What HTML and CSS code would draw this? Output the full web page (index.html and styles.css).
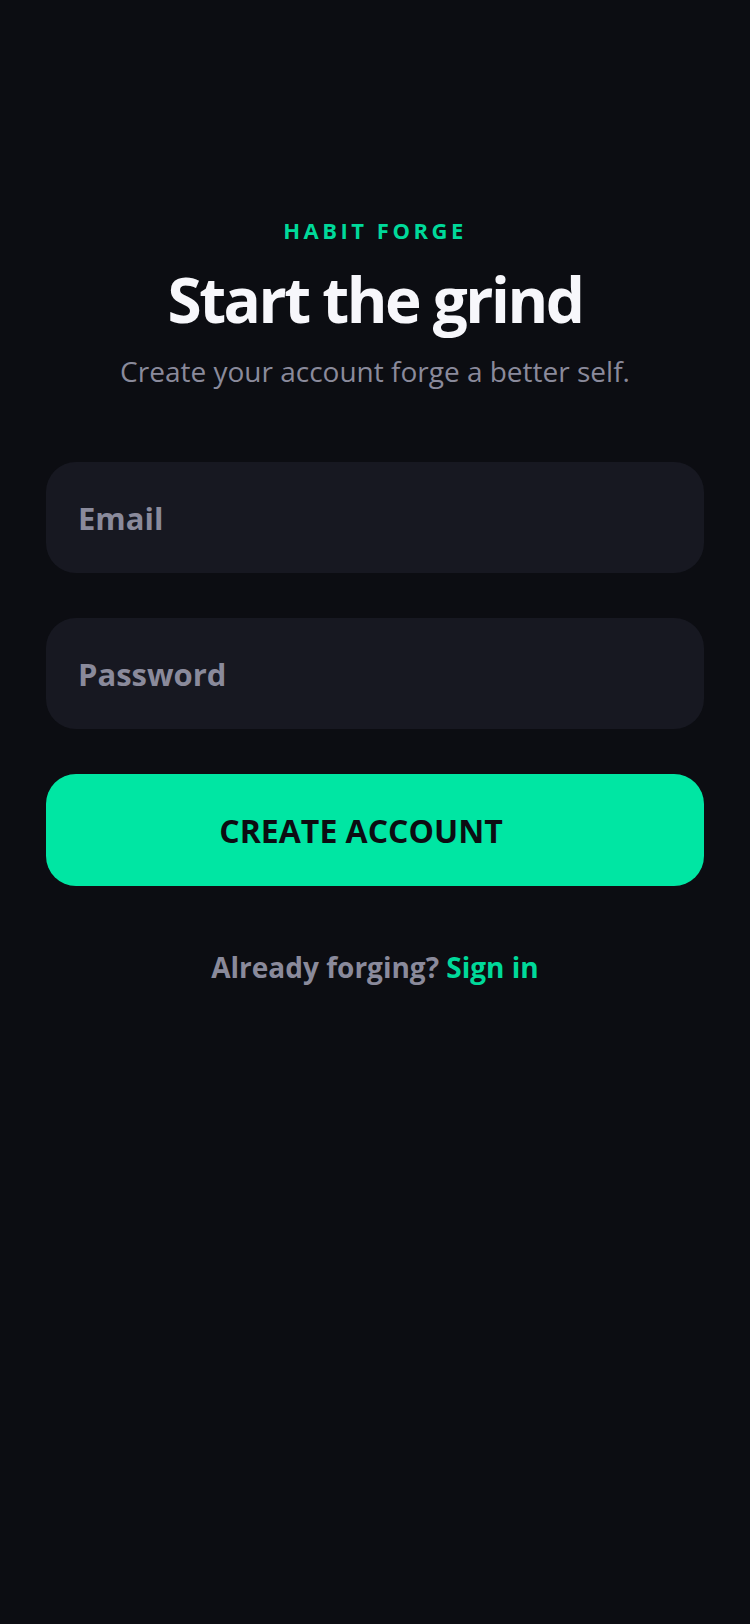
FILE: index.html
```html
<!DOCTYPE html>
<html lang="en">
<head>
<meta charset="utf-8">
<title>Habit Forge - Sign up</title>
<link rel="stylesheet" href="styles.css">
</head>
<body>
<main class="screen">
  <header class="intro">
    <p class="brand">HABIT FORGE</p>
    <h1 class="title">Start the grind</h1>
    <p class="subtitle">Create your account forge a better self.</p>
  </header>
  <form class="form">
    <input class="field" type="email" placeholder="Email">
    <input class="field" type="password" placeholder="Password">
    <button class="cta" type="button"><span class="cta-label">CREATE ACCOUNT</span><span class="cta-slot"></span></button>
  </form>
  <p class="alt">Already forging? <a class="alt-link" href="#">Sign in</a></p>
</main>
</body>
</html>
```

FILE: styles.css
```css
* { box-sizing: border-box; }
html, body {
  margin: 0;
  padding: 0;
  background: #0c0d12;
}
body {
  font-family: "Open Sans", "Noto Sans", sans-serif;
  min-height: 1624px;
}
.screen {
  display: flex;
  flex-direction: column;
  align-items: stretch;
  padding: 215px 46px 0;
}
.intro {
  display: flex;
  flex-direction: column;
  align-items: center;
  text-align: center;
}
.brand {
  margin: 0;
  font-size: 22px;
  line-height: 30px;
  font-weight: 700;
  letter-spacing: 0.16em;
  color: #00d99a;
}
.title {
  margin: 16px 0 0;
  font-size: 62px;
  line-height: 76px;
  font-weight: 700;
  letter-spacing: -0.04em;
  color: #f7f7fb;
}
.subtitle {
  margin: 15px 0 0;
  font-size: 28px;
  line-height: 38px;
  font-weight: 400;
  color: #8a8a9b;
}
.form {
  display: flex;
  flex-direction: column;
  gap: 45px;
  margin-top: 72px;
}
.field {
  display: block;
  width: 100%;
  height: 111px;
  border: 0;
  outline: 0;
  border-radius: 30px;
  background: #171821;
  padding: 0 32px;
  font-family: inherit;
  font-size: 31px;
  font-weight: 700;
  color: #e6e6ee;
}
.field::placeholder {
  color: #8a8a9b;
  opacity: 1;
}
.cta {
  display: flex;
  align-items: center;
  justify-content: center;
  width: 100%;
  height: 112px;
  border: 0;
  border-radius: 30px;
  background: #00e6a3;
  font-family: inherit;
  font-size: 32px;
  font-weight: 700;
  color: #0c0d12;
  cursor: pointer;
}
.cta-slot {
  width: 28px;
}
.alt {
  margin: 63px 0 0;
  text-align: center;
  font-size: 28px;
  line-height: 36px;
  font-weight: 700;
  color: #8a8a9b;
}
.alt-link {
  color: #00d99a;
  text-decoration: none;
}
```
